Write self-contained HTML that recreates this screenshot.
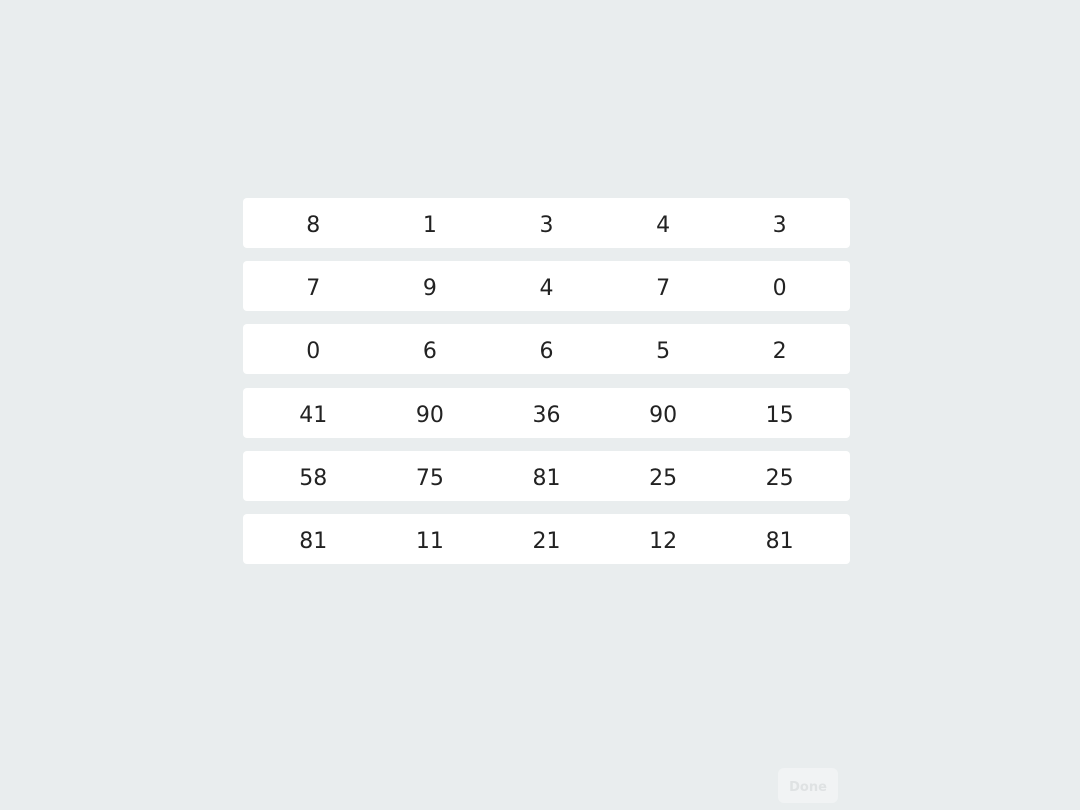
<!DOCTYPE html>
<html><head><style>
body{margin:0;width:1080px;height:810px;background:#e9edee;position:relative;overflow:hidden;font-family:"DejaVu Sans",sans-serif;}
.row{position:absolute;left:243px;width:607px;height:50px;background:#fff;border-radius:4px;display:flex;padding:0 12px;box-sizing:border-box;}
.row span{flex:1;text-align:center;line-height:55px;font-size:22px;color:#222;}
.done{position:absolute;left:778px;top:768px;width:60px;height:35px;background:#f1f3f4;border-radius:6px;color:#dfe2e3;font-size:13px;font-weight:bold;text-align:center;line-height:39px;}
</style></head><body>
<div class="row" style="top:198px"><span>8</span><span>1</span><span>3</span><span>4</span><span>3</span></div>
<div class="row" style="top:261px"><span>7</span><span>9</span><span>4</span><span>7</span><span>0</span></div>
<div class="row" style="top:324px"><span>0</span><span>6</span><span>6</span><span>5</span><span>2</span></div>
<div class="row" style="top:388px"><span>41</span><span>90</span><span>36</span><span>90</span><span>15</span></div>
<div class="row" style="top:451px"><span>58</span><span>75</span><span>81</span><span>25</span><span>25</span></div>
<div class="row" style="top:514px"><span>81</span><span>11</span><span>21</span><span>12</span><span>81</span></div>
<div class="done">Done</div>
</body></html>
